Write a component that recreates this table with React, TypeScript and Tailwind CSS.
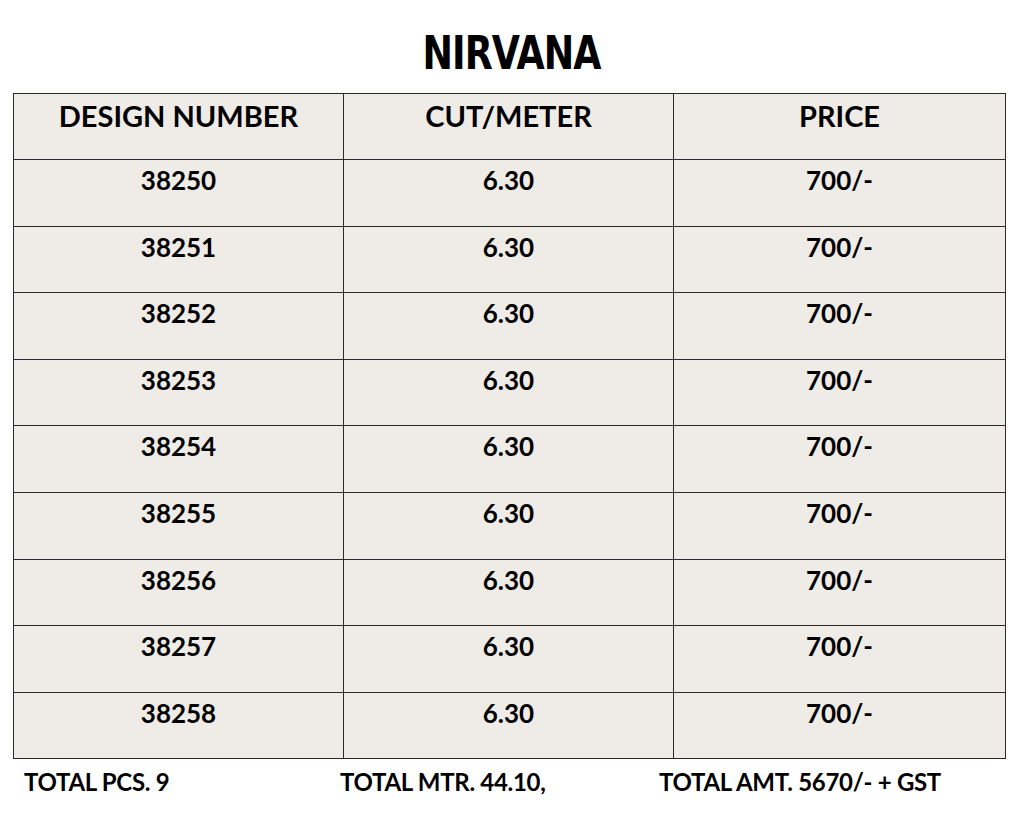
const rows = ["38250", "38251", "38252", "38253", "38254", "38255", "38256", "38257", "38258"]

export default function App() {
  return (
    <div className="w-[1023px] h-[825px] bg-white text-black overflow-hidden font-['Lato','Liberation_Sans',sans-serif]">
      <h1 className="pt-[29px] h-[93px] text-center text-[46px] leading-[48px] font-bold tracking-[-1px] font-['DejaVu_Sans_Condensed','Liberation_Sans',sans-serif] [transform:scaleX(0.88)]">
        NIRVANA
      </h1>

      <div className="ml-[13px] w-[993px] border border-[#2a2a2a] bg-[#efece7]">
        <div className="grid grid-cols-[330px_330px_1fr] h-[66px] border-b border-[#2a2a2a]">
          <div className="border-r border-[#2a2a2a] text-center text-[29px] font-bold">DESIGN NUMBER</div>
          <div className="border-r border-[#2a2a2a] text-center text-[29px] font-bold">CUT/METER</div>
          <div className="text-center text-[29px] font-bold">PRICE</div>
        </div>
        {rows.map((num, i) => (
          <div
            key={num}
            className={
              i < rows.length - 1
                ? "grid grid-cols-[330px_330px_1fr] h-[66.6px] border-b border-[#2a2a2a]"
                : "grid grid-cols-[330px_330px_1fr] h-[65px]"
            }
          >
            <div className="border-r border-[#2a2a2a] text-center pt-[1px] text-[26px] font-bold">{num}</div>
            <div className="border-r border-[#2a2a2a] text-center pt-[1px] text-[26px] font-bold">6.30</div>
            <div className="text-center pt-[1px] text-[26px] font-bold">700/-</div>
          </div>
        ))}
      </div>

      <div className="flex mt-[5px] text-[24px] font-bold tracking-[-0.3px]">
        <div className="pl-[24px] w-[340px]">TOTAL PCS. 9</div>
        <div className="w-[319px]">TOTAL MTR. 44.10,</div>
        <div>TOTAL AMT. 5670/- + GST</div>
      </div>
    </div>
  )
}
